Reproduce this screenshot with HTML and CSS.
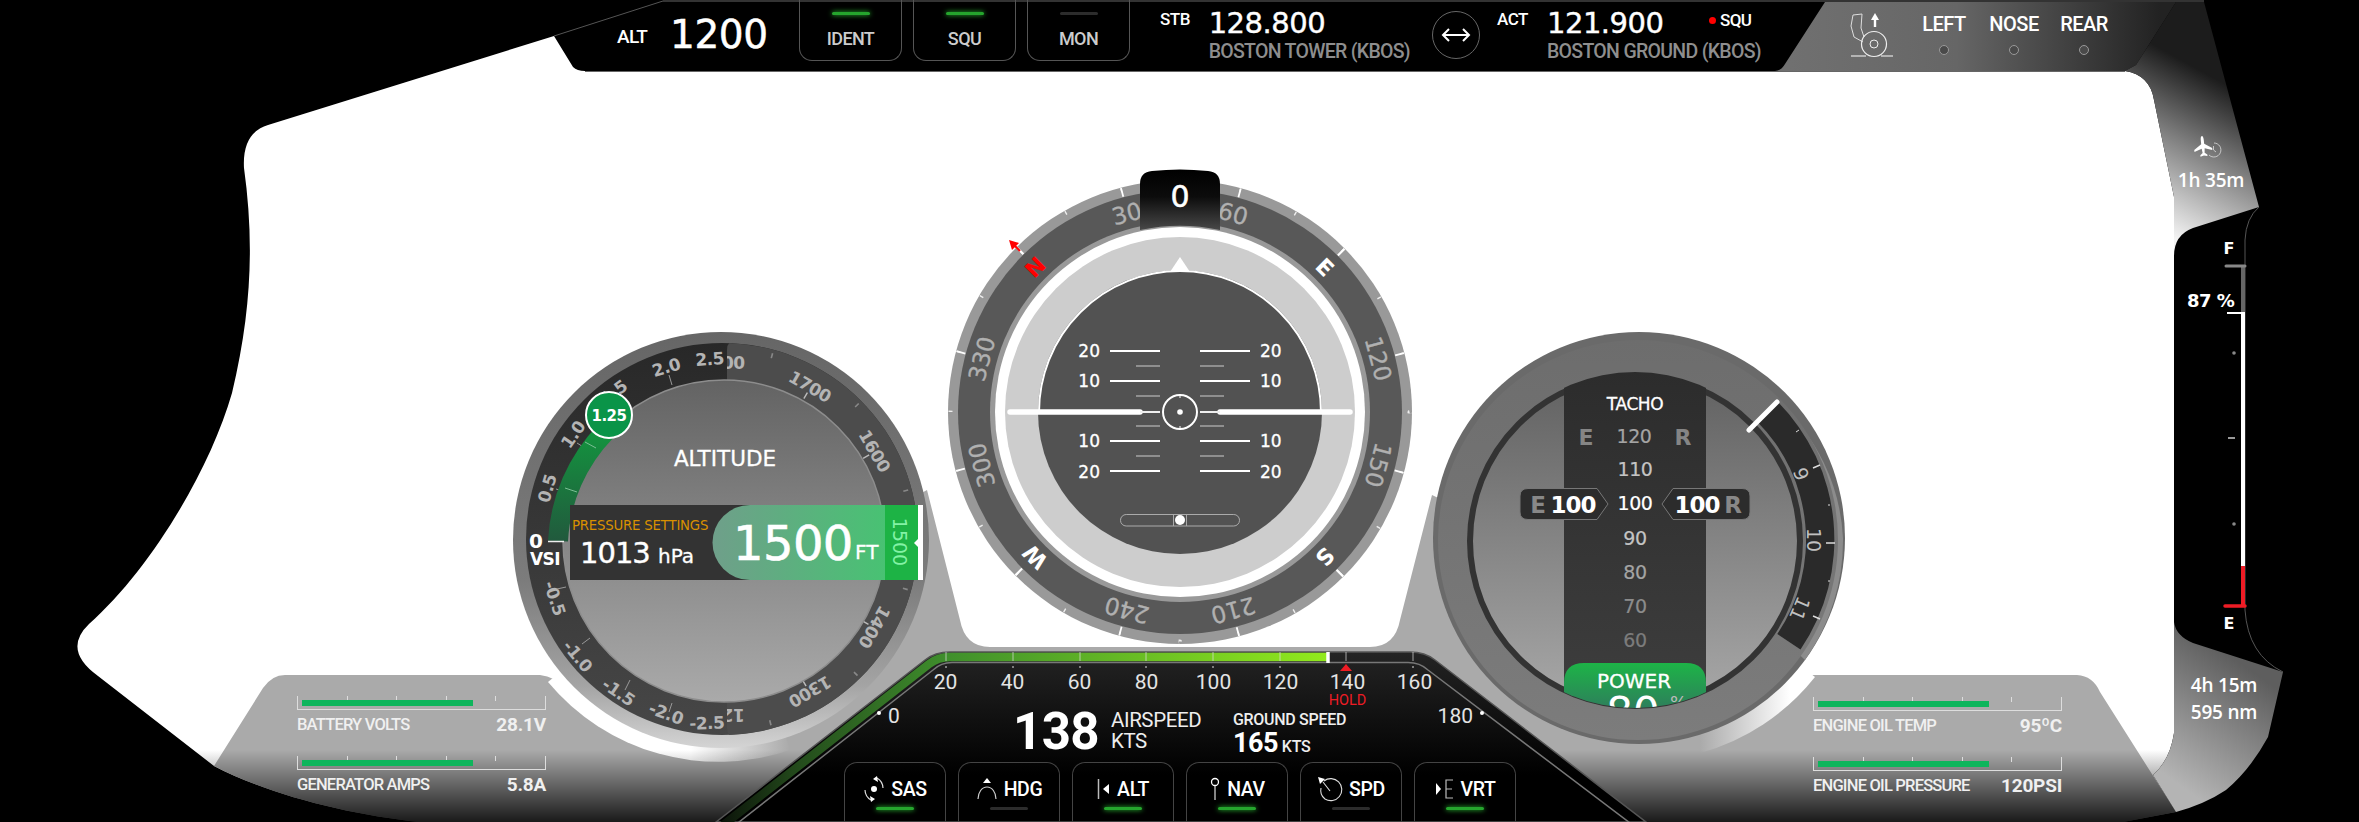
FILE: index.html
```html
<!DOCTYPE html>
<html lang="en">
<head>
    <meta charset="UTF-8">
    <title>Flight display</title>
    <link rel="stylesheet" href="styles.css">
</head>
<body>
<div class="cluster">

    <!-- body of the display: white glass, side strips, lower panels -->
    <svg class="layer shell" viewBox="0 0 2359 822">
        <defs>
            <linearGradient id="gearGrad" gradientUnits="userSpaceOnUse" x1="1790" y1="0" x2="2160" y2="0">
                <stop offset="0" stop-color="#707070"/>
                <stop offset=".45" stop-color="#666"/>
                <stop offset="1" stop-color="#222"/>
            </linearGradient>
            <linearGradient id="stripTop" gradientUnits="userSpaceOnUse" x1="2168" y1="235" x2="2245" y2="95">
                <stop offset="0" stop-color="#f4f4f4"/>
                <stop offset=".55" stop-color="#808080"/>
                <stop offset="1" stop-color="#1c1c1c"/>
            </linearGradient>
            <linearGradient id="stripBottom" gradientUnits="userSpaceOnUse" x1="2172" y1="780" x2="2250" y2="670">
                <stop offset="0" stop-color="#b4b4b4"/>
                <stop offset="1" stop-color="#5e5e5e"/>
            </linearGradient>
            <linearGradient id="fadeOut" x1="0" y1="0" x2="0" y2="1">
                <stop offset="0" stop-color="#000" stop-opacity="0"/>
                <stop offset="1" stop-color="#000" stop-opacity=".85"/>
            </linearGradient>
            <linearGradient id="crescentL" gradientUnits="userSpaceOnUse" x1="690" y1="0" x2="790" y2="0">
                <stop offset="0" stop-color="#fff"/>
                <stop offset="1" stop-color="#aaa"/>
            </linearGradient>
            <linearGradient id="crescentR" gradientUnits="userSpaceOnUse" x1="1790" y1="0" x2="1700" y2="0">
                <stop offset="0" stop-color="#fff"/>
                <stop offset="1" stop-color="#aaa"/>
            </linearGradient>
        </defs>
        <path fill="#fff" d="M554 36 L573 67 Q577 71 585 71 L2125 71 Q2150 75 2154 100 L2174 197 L2174 733 Q2170 760 2153 775 L2176 812 L2123 822 L420 822 C350 815 270 795 214 766 L98 676 Q62 650 89 624 C150 570 210 470 232 393 C252 310 254 240 244 168 Q242 133 268 125 Z"/>
        <path fill="#aaa" d="M214 766 L263 688 Q272 675 285 675 L540 675 Q555 677 566 688 L927 490 L960 620 Q965 647 990 647 L1370 647 Q1395 647 1400 620 L1432 495 L1810 675 L2077 675 Q2093 676 2100 692 L2176 812 L2123 822 L420 822 C350 815 270 795 214 766 Z"/>
        <path fill="url(#crescentL)" d="M548 682 A222 222 0 0 0 790 750 L722 539 Z"/>
        <path fill="url(#crescentR)" d="M1815 677 A222 222 0 0 1 1700 753 L1638 540 Z"/>
        <rect x="0" y="750" width="2359" height="72" fill="url(#fadeOut)"/>
        <path fill="url(#gearGrad)" d="M1825 2 L1785 64 Q1781 71 1775 71 L2125 71 L2136 65 L2176 2 Z"/>
        <path fill="url(#stripTop)" d="M2176 2 L2204 2 L2259 207 L2193 228 Q2174 235 2174 256 L2174 197 L2154 100 Q2150 75 2125 71 L2136 65 Z"/>
        <path fill="url(#stripBottom)" d="M2174 622 Q2176 636 2193 643 L2283 672 L2268 737 Q2250 770 2226 790 Q2205 804 2176 812 L2153 775 Q2170 760 2174 733 Z"/>
        <path fill="none" stroke="#555" d="M554 36 L663 1 M2259 207 Q2246 218 2245 240 L2245 610 Q2248 655 2283 672"/>
        <path fill="none" stroke="#666" d="M585 71.5 L2125 71.5"/>
        <rect x="663" y="0" width="1541" height="2" fill="#333"/>
    </svg>

    <!-- altitude dial -->
    <svg class="layer dial-alt" viewBox="510 328 425 430">
        <defs>
            <linearGradient id="altRim" x1="0" y1="0" x2="0" y2="1">
                <stop offset="0" stop-color="#666"/>
                <stop offset=".6" stop-color="#7c7c7c"/>
                <stop offset=".85" stop-color="#a4a4a4"/>
                <stop offset="1" stop-color="#d4d4d4"/>
            </linearGradient>
            <linearGradient id="altBand" x1="0" y1="0" x2="0" y2="1">
                <stop offset="0" stop-color="#282828"/>
                <stop offset="1" stop-color="#474747"/>
            </linearGradient>
            <linearGradient id="altFace" x1="0" y1="0" x2="0" y2="1">
                <stop offset="0" stop-color="#636363"/>
                <stop offset="1" stop-color="#aaa"/>
            </linearGradient>
            <linearGradient id="vsiArc" gradientUnits="userSpaceOnUse" x1="0" y1="540" x2="0" y2="420">
                <stop offset="0" stop-color="#215a3d"/>
                <stop offset="1" stop-color="#129a3f"/>
            </linearGradient>
            <linearGradient id="altPill" gradientUnits="userSpaceOnUse" x1="713" y1="0" x2="885" y2="0">
                <stop offset="0" stop-color="#6f9f8a"/>
                <stop offset="1" stop-color="#48c273"/>
            </linearGradient>
            <clipPath id="rightHalf"><path d="M737 340 Q727 340 727 350 L727 728 Q727 738 737 738 L930 738 L930 340 Z"/></clipPath>
        </defs>
        <circle cx="721" cy="540" r="208" fill="url(#altRim)"/>
        <circle cx="722" cy="539" r="196" fill="url(#altBand)"/>
        <g clip-path="url(#rightHalf)">
            <circle cx="722" cy="539" r="196" fill="#4c4c4c"/>
            <circle cx="722" cy="539" r="190" fill="none" stroke="#888" stroke-width="5" pathLength="360" stroke-dasharray=".5 29.5" stroke-dashoffset="-15"/>
            <circle cx="722" cy="539" r="166" fill="none" stroke="#bbb" stroke-width="7" pathLength="360" stroke-dasharray=".5 29.5"/>
            <g class="alt-num">
                <text x="722" y="369" transform="rotate(0 722 539)">1800</text>
                <text x="722" y="369" transform="rotate(30 722 539)">1700</text>
                <text x="722" y="369" transform="rotate(60 722 539)">1600</text>
                <text x="722" y="369" transform="rotate(120 722 539)">1400</text>
                <text x="722" y="369" transform="rotate(150 722 539)">1300</text>
                <text x="722" y="369" transform="rotate(180 722 539)">1200</text>
            </g>
        </g>
        <g class="alt-num">
            <text transform="translate(710 365) rotate(-4)">2.5</text>
            <text transform="translate(668 373) rotate(-17)">2.0</text>
            <text transform="translate(617 397) rotate(-36)">1.5</text>
            <text transform="translate(578 438) rotate(-55)">1.0</text>
            <text transform="translate(553 490) rotate(-74)">0.5</text>
            <text transform="translate(549 600) rotate(72)">-0.5</text>
            <text transform="translate(573 660) rotate(50)">-1.0</text>
            <text transform="translate(615 697) rotate(35)">-1.5</text>
            <text transform="translate(664 719) rotate(20)">-2.0</text>
            <text transform="translate(707 729) rotate(-2)">-2.5</text>
        </g>
        <g stroke="#999" fill="none">
            <path d="M672 385 L669 375 M585 448 L577 443 M566 492 L556 489 M566 587 L557 589 M590 638 L582 644 M630 680 L625 690 M672 703 L669 712"/>
        </g>
        <circle cx="724" cy="541" r="161" fill="url(#altFace)" stroke="#8d8d8d" stroke-width="1.5"/>
        <path d="M558 541 A170 170 0 0 1 606 431" fill="none" stroke="url(#vsiArc)" stroke-width="20"/>
        <path d="M548 541.5 L564 541.5" stroke="#eee" stroke-width="1.5"/>
        <path d="M565 488 L577 492 M585 442 L596 448" stroke="#7cbf95"/>
        <text class="vsi-zero" x="536" y="548">0</text>
        <text class="vsi-label" x="545" y="565">VSI</text>

        <text class="alt-title" x="725" y="466">ALTITUDE</text>

        <rect x="570" y="505" width="200" height="75" fill="#333"/>
        <path d="M923 505 L750 505 A37.5 37.5 0 0 0 750 580 L923 580 Z" fill="url(#altPill)"/>
        <rect x="885" y="505" width="35" height="75" fill="#1db345"/>
        <rect x="918" y="505" width="5" height="75" fill="#fff"/>
        <path d="M914 543 L921 536 L921 550 Z" fill="#fff"/>
        <text class="press-label" x="572" y="530">PRESSURE SETTINGS</text>
        <text class="press-value" x="580" y="563">1013</text>
        <text class="press-unit" x="658" y="563">hPa</text>
        <text class="alt-value" x="733" y="560">1500</text>
        <text class="alt-unit" x="855" y="559">FT</text>
        <text class="alt-mark" transform="translate(899 542) rotate(90)" y="6">1500</text>

        <circle cx="609" cy="415" r="23" fill="#0a9448" stroke="#fff" stroke-width="2"/>
        <text class="vsi-marker" x="609" y="421">1.25</text>
    </svg>

    <!-- compass and attitude -->
    <svg class="layer dial-compass" viewBox="940 165 480 482">
        <defs>
            <linearGradient id="hdgTab" x1="0" y1="0" x2="0" y2="1">
                <stop offset="0" stop-color="#000"/>
                <stop offset=".45" stop-color="#0c0c0c"/>
                <stop offset="1" stop-color="#484848"/>
            </linearGradient>
        </defs>
        <circle cx="1180" cy="412" r="232" fill="#999"/>
        <circle cx="1180" cy="412" r="222" fill="#585858"/>
        <circle cx="1180" cy="412" r="190" fill="#999"/>
        <circle cx="1180" cy="412" r="185" fill="#fff"/>
        <circle cx="1180" cy="412" r="175" fill="#cdcdcd"/>
        <circle cx="1180" cy="412" r="142" fill="#525252"/>
        <circle cx="1180" cy="412" r="229.500" fill="none" stroke="#eee" stroke-width="4" pathLength="360" stroke-dasharray=".35 14.65"/>
        <circle cx="1180" cy="412" r="227" fill="none" stroke="#fff" stroke-width="9" pathLength="360" stroke-dasharray=".5 89.5" stroke-dashoffset="-45"/>
        <circle cx="1180" cy="412" r="227" fill="none" stroke="#fff" stroke-width="9" pathLength="360" stroke-dasharray=".45 29.55" stroke-dashoffset="-15"/>

        <g class="hdg-num">
            <text x="1180" y="215" transform="rotate(-15 1180 412)">30</text>
            <text x="1180" y="215" transform="rotate(15 1180 412)">60</text>
            <text x="1180" y="215" transform="rotate(75 1180 412)">120</text>
            <text x="1180" y="215" transform="rotate(105 1180 412)">150</text>
            <text x="1180" y="215" transform="rotate(165 1180 412)">210</text>
            <text x="1180" y="215" transform="rotate(195 1180 412)">240</text>
            <text x="1180" y="215" transform="rotate(255 1180 412)">300</text>
            <text x="1180" y="215" transform="rotate(285 1180 412)">330</text>
        </g>
        <g class="hdg-point">
            <text x="1180" y="215" transform="rotate(45 1180 412)">E</text>
            <text x="1180" y="215" transform="rotate(135 1180 412)">S</text>
            <text x="1180" y="215" transform="rotate(225 1180 412)">W</text>
            <text class="hdg-north" x="1180" y="215" transform="rotate(315 1180 412)">N</text>
        </g>
        <path d="M1020 251 L1012 243" stroke="#f00" stroke-width="2"/>
        <path d="M1009 240 L1019 243 L1012 250 Z" fill="#f00"/>

        <path d="M1140 230 L1140 184 Q1140 172 1152 171 Q1180 168 1208 171 Q1220 172 1220 184 L1220 230 A190 190 0 0 0 1140 230 Z" fill="url(#hdgTab)"/>
        <text class="hdg-value" x="1180" y="207">0</text>

        <path d="M1039 412 A141 141 0 0 1 1321 412" fill="none" stroke="#fff" stroke-width="2"/>
        <path d="M1180 257 L1190 272 L1170 272 Z" fill="#fff"/>

        <path d="M1010 412 L1140 412 M1220 412 L1350 412" stroke="#fff" stroke-width="5.5" stroke-linecap="round"/>
        <path d="M1140 412 L1160 412 M1200 412 L1220 412" stroke="#eee" stroke-width="2"/>
        <path d="M1110 351 H1160 M1110 381 H1160 M1110 441 H1160 M1110 471 H1160 M1200 351 H1250 M1200 381 H1250 M1200 441 H1250 M1200 471 H1250" stroke="#fff" stroke-width="2.2"/>
        <path d="M1136 366 H1160 M1136 396 H1160 M1136 426 H1160 M1136 456 H1160 M1200 366 H1224 M1200 396 H1224 M1200 426 H1224 M1200 456 H1224" stroke="#ccc"/>
        <g class="pitch-l">
            <text x="1100" y="357">20</text>
            <text x="1100" y="387">10</text>
            <text x="1100" y="447">10</text>
            <text x="1100" y="478">20</text>
        </g>
        <g class="pitch-r">
            <text x="1260" y="357">20</text>
            <text x="1260" y="387">10</text>
            <text x="1260" y="447">10</text>
            <text x="1260" y="478">20</text>
        </g>
        <circle cx="1180" cy="412" r="17" fill="none" stroke="#fff" stroke-width="2"/>
        <path d="M1180 394 V398 M1180 426 V430" stroke="#fff"/>
        <circle cx="1180" cy="412" r="2.8" fill="#fff"/>
        <rect x="1120.5" y="514.5" width="119" height="11.5" rx="5.7" fill="none" stroke="#aaa"/>
        <path d="M1173.5 514 V526 M1186.5 514 V526" stroke="#aaa"/>
        <circle cx="1180" cy="520" r="5" fill="#fff"/>
    </svg>

    <!-- tacho dial -->
    <svg class="layer dial-tacho" viewBox="1428 328 422 420">
        <defs>
            <linearGradient id="tachoRim" x1="0" y1="0" x2="0" y2="1">
                <stop offset="0" stop-color="#6d6d6d"/>
                <stop offset="1" stop-color="#7c7c7c"/>
            </linearGradient>
            <linearGradient id="tachoFace" x1="0" y1="0" x2="0" y2="1">
                <stop offset="0" stop-color="#616161"/>
                <stop offset="1" stop-color="#a8a8a8"/>
            </linearGradient>
            <linearGradient id="tachoStrip" x1="0" y1="0" x2="0" y2="1">
                <stop offset="0" stop-color="#2c2c2c"/>
                <stop offset="1" stop-color="#3e3e3e"/>
            </linearGradient>
            <linearGradient id="powerPill" x1="0" y1="0" x2="0" y2="1">
                <stop offset="0" stop-color="#1db447"/>
                <stop offset="1" stop-color="#2e7d5c"/>
            </linearGradient>
            <clipPath id="tachoClip"><circle cx="1635" cy="540" r="168"/></clipPath>
        </defs>
        <circle cx="1639" cy="538" r="206" fill="#6a6a6a"/>
        <path d="M1777 401 A196 196 0 0 1 1843 538 A206 206 0 0 1 1805 660 L1777.3 634 Z" fill="#8c8c8c"/>
        <circle cx="1638" cy="540" r="200" fill="url(#tachoRim)"/>
        <path d="M1777 401 A196 196 0 0 1 1800.5 649.6 L1777.3 634 A168 168 0 0 0 1756.8 421.2 Z" fill="#2a2a2a"/>
        <circle cx="1635" cy="541" r="165" fill="url(#tachoFace)" stroke="#333" stroke-width="6"/>
        <path d="M1749 430 L1777 402" stroke="#fff" stroke-width="5" stroke-linecap="round"/>
        <g stroke="#ddd" fill="none">
            <path d="M1813 468 L1820 465 M1826 543 L1835 543 M1813 616 L1820 619" stroke-width="1.5"/>
            <path d="M1796 432 L1799 430 M1828 505 L1830 505 M1828 581 L1830 581"/>
        </g>
        <g class="tacho-scale">
            <text x="1638" y="371" transform="rotate(68 1638 540)">9</text>
            <text x="1638" y="371" transform="rotate(90 1638 540)">10</text>
            <text x="1638" y="371" transform="rotate(113 1638 540)">11</text>
        </g>

        <g clip-path="url(#tachoClip)">
            <rect x="1564" y="370" width="142" height="340" fill="url(#tachoStrip)"/>
            <path d="M1564 710 L1564 683 Q1564 663 1584 663 L1686 663 Q1706 663 1706 683 L1706 710 Z" fill="url(#powerPill)"/>
            <text class="power-label" x="1634" y="688">POWER</text>
            <text class="power-value" x="1633" y="727">80</text>
            <text class="power-unit" x="1670" y="709">%</text>
        </g>

        <text class="tacho-title" x="1635" y="410">TACHO</text>
        <text class="tacho-side" x="1586" y="445">E</text>
        <text class="tacho-side" x="1683" y="445">R</text>
        <g class="tacho-num">
            <text class="fade-3" x="1634" y="443">120</text>
            <text class="fade-2" x="1635" y="476">110</text>
            <text class="fade-0" x="1635" y="510">100</text>
            <text class="fade-2" x="1635" y="545">90</text>
            <text class="fade-3" x="1635" y="579">80</text>
            <text class="fade-4" x="1635" y="613">70</text>
            <text class="fade-5" x="1635" y="647">60</text>
        </g>
        <path d="M1528 488.5 L1597 488.5 L1608 504 L1597 519.5 L1528 519.5 Q1520 519.5 1520 512 L1520 496 Q1520 488.5 1528 488.5 Z" fill="#2c2c2c" stroke="#777"/>
        <path d="M1742 488.5 L1673 488.5 L1662 504 L1673 519.5 L1742 519.5 Q1750 519.5 1750 512 L1750 496 Q1750 488.5 1742 488.5 Z" fill="#2c2c2c" stroke="#777"/>
        <text class="tag-letter" x="1538" y="513">E</text>
        <text class="tag-value" x="1573" y="513">100</text>
        <text class="tag-value" x="1697" y="513">100</text>
        <text class="tag-letter" x="1733" y="513">R</text>
    </svg>

    <!-- fuel scale -->
    <svg class="layer dial-fuel" viewBox="2180 235 70 400">
        <path d="M2243 266 V312" stroke="#666" stroke-width="4"/>
        <path d="M2243 312 V566" stroke="#fff" stroke-width="4"/>
        <path d="M2243 566 V607" stroke="#ee1c25" stroke-width="4"/>
        <path d="M2226 266 H2245" stroke="#888" stroke-width="3" stroke-linecap="round"/>
        <path d="M2227 313 H2245" stroke="#fff" stroke-width="2"/>
        <path d="M2225 606 H2245" stroke="#ee1c25" stroke-width="3.5" stroke-linecap="round"/>
        <path d="M2228 438 H2235" stroke="#ccc" stroke-width="1.5"/>
        <circle cx="2234" cy="353" r="1.8" fill="#888"/>
        <circle cx="2234" cy="524" r="1.8" fill="#888"/>
        <text class="fuel-mark" x="2229" y="254">F</text>
        <text class="fuel-value" x="2187" y="307">87 %</text>
        <text class="fuel-mark" x="2229" y="629">E</text>
    </svg>

    <!-- top bar -->
    <header class="topbar">
        <div class="alt-block">
            <span class="alt-tag">ALT</span>
            <span class="alt-read">1200</span>
        </div>
        <div class="top-buttons">
            <div class="top-btn"><i class="led on"></i><span>IDENT</span></div>
            <div class="top-btn"><i class="led on"></i><span>SQU</span></div>
            <div class="top-btn"><i class="led"></i><span>MON</span></div>
        </div>
        <div class="radio radio-stb">
            <span class="radio-tag">STB</span>
            <div>
                <div class="radio-freq">128.800</div>
                <div class="radio-name">BOSTON TOWER (KBOS)</div>
            </div>
        </div>
        <div class="swap">
            <svg width="30" height="16" viewBox="0 0 30 16"><path d="M2 8 H28 M8 2 L2 8 L8 14 M22 2 L28 8 L22 14" fill="none" stroke="#fff" stroke-width="2"/></svg>
        </div>
        <div class="radio radio-act">
            <span class="radio-tag">ACT</span>
            <div>
                <div class="radio-freq">121.900</div>
                <div class="radio-name">BOSTON GROUND (KBOS)</div>
            </div>
            <span class="radio-squ"><i></i>SQU</span>
        </div>
    </header>

    <div class="gearbar">
        <svg class="gear-icon" width="62" height="46" viewBox="1847 12 62 46">
            <path d="M1851 26 L1853 15 L1862 14 L1861 28 L1864 37 M1851 26 L1854 37 L1863 42" fill="none" stroke="#ddd"/>
            <circle cx="1874" cy="44" r="12.5" fill="none" stroke="#eee" stroke-width="1.2"/>
            <circle cx="1874" cy="44" r="4" fill="none" stroke="#eee"/>
            <path d="M1875 27 V18" stroke="#fff" stroke-width="2.4"/>
            <path d="M1875 13 L1879 20 L1871 20 Z" fill="#fff"/>
            <path d="M1851 56 H1866 M1881 56 H1893" stroke="#ccc" stroke-width="1.6"/>
        </svg>
        <div class="gear-col"><span>LEFT</span><i></i></div>
        <div class="gear-col"><span>NOSE</span><i></i></div>
        <div class="gear-col"><span>REAR</span><i></i></div>
    </div>

    <div class="trip trip-top">
        <svg width="36" height="26" viewBox="0 0 36 26">
            <g transform="translate(15 12) rotate(-6)">
                <path d="M0 -11 C1 -11 1.5 -9 1.5 -7 L1.5 -3 L9 2 L9 4 L1.5 1.5 L1 6 L3.5 8 L3.5 9.5 L0 8.5 L-3.5 9.5 L-3.5 8 L-1 6 L-1.5 1.5 L-9 4 L-9 2 L-1.5 -3 L-1.5 -7 C-1.5 -9 -1 -11 0 -11 Z" fill="#fff"/>
            </g>
            <path d="M26 8 A7 7 0 1 1 21 20 M25.500 11 V15 L28 17" fill="none" stroke="#ddd" stroke-width=".8"/>
        </svg>
        <span>1h 35m</span>
    </div>
    <div class="trip trip-bottom">
        <span>4h 15m</span>
        <span>595 nm</span>
    </div>

    <!-- lower meters -->
    <section class="meters meters-left">
        <div class="meter">
            <div class="track"><div class="ticks"><i></i><i></i><i></i><i></i><i></i></div><div class="fill" style="width: 171px"></div></div>
            <div class="meter-row"><span>BATTERY VOLTS</span><b>28.1V</b></div>
        </div>
        <div class="meter">
            <div class="track"><div class="ticks"><i></i><i></i><i></i><i></i><i></i></div><div class="fill" style="width: 171px"></div></div>
            <div class="meter-row"><span>GENERATOR AMPS</span><b>5.8A</b></div>
        </div>
    </section>
    <section class="meters meters-right">
        <div class="meter">
            <div class="track"><div class="ticks"><i></i><i></i><i></i><i></i><i></i></div><div class="fill" style="width: 171px"></div></div>
            <div class="meter-row"><span>ENGINE OIL TEMP</span><b>95ºC</b></div>
        </div>
        <div class="meter">
            <div class="track"><div class="ticks"><i></i><i></i><i></i><i></i><i></i></div><div class="fill" style="width: 171px"></div></div>
            <div class="meter-row"><span>ENGINE OIL PRESSURE</span><b>120PSI</b></div>
        </div>
    </section>

    <!-- airspeed panel -->
    <svg class="layer speed-back" viewBox="0 0 2359 822">
        <defs>
            <linearGradient id="speedFill" gradientUnits="userSpaceOnUse" x1="0" y1="652" x2="0" y2="775">
                <stop offset="0" stop-color="#242424"/>
                <stop offset="1" stop-color="#000"/>
            </linearGradient>
            <linearGradient id="speedBar" gradientUnits="userSpaceOnUse" x1="722" y1="0" x2="1328" y2="0">
                <stop offset="0" stop-color="#0c140a"/>
                <stop offset=".13" stop-color="#244d1c"/>
                <stop offset=".37" stop-color="#3f8f2c"/>
                <stop offset="1" stop-color="#92ea1c"/>
            </linearGradient>
        </defs>
        <path d="M716 822 L925 660 Q935 652 950 652 L1410 652 Q1425 652 1435 660 L1646 822 Z" fill="url(#speedFill)" stroke="#555" stroke-width="1.5"/>
        <path d="M722 826 L929 664 Q938 657 950 657 L1328 657" fill="none" stroke="url(#speedBar)" stroke-width="8.500"/>
        <path d="M734 826 L933 670 Q941 662.500 952 662.500 L1408 662.500 Q1420 662.500 1428 670 L1634 826" fill="none" stroke="#777" stroke-width="1.5"/>
        <path d="M946 652 V661 M1013 652 V661 M1080 652 V661 M1146 652 V661 M1213 652 V661 M1280 652 V661 M1346 652 V661 M1413 652 V661" stroke="#ddd" stroke-opacity=".7"/>
        <path d="M1328 652 V663" stroke="#fff" stroke-width="3.500"/>
        <path d="M946 666 V668 M1013 666 V668 M1080 666 V668 M1146 666 V668 M1213 666 V668 M1280 666 V668 M1413 666 V668" stroke="#ddd"/>
        <path d="M1346 664 L1352 671 L1340 671 Z" fill="#ee1c25"/>
    </svg>

    <section class="speed">
        <div class="speed-scale">
            <span>20</span><span>40</span><span>60</span><span>80</span><span>100</span><span>120</span>
            <span class="hold-mark">140<em>HOLD</em></span><span>160</span>
        </div>
        <div class="speed-read">
            <span class="limit limit-low"><i></i>0</span>
            <strong class="air-value">138</strong>
            <span class="air-label">AIRSPEED<br>KTS</span>
            <div class="ground">
                <span>GROUND SPEED</span>
                <div><b>165</b> KTS</div>
            </div>
            <span class="limit limit-high">180<i></i></span>
        </div>
        <div class="modes">
            <div class="mode">
                <div class="mode-top">
                    <svg width="22" height="26" viewBox="0 0 22 26">
                        <circle cx="11" cy="13" r="3" fill="#fff"/>
                        <path d="M14 2 A12 12 0 0 1 20 12 M8 24 A12 12 0 0 1 2 14" fill="none" stroke="#ddd" stroke-width="1.2"/>
                        <path d="M14 0 L10 3 L15 6 Z M8 26 L12 23 L7 20 Z" fill="#fff"/>
                    </svg>
                    <span>SAS</span>
                </div>
                <i class="led on"></i>
            </div>
            <div class="mode">
                <div class="mode-top">
                    <svg width="22" height="24" viewBox="0 0 22 24">
                        <path d="M11 1 L15 6 L7 6 Z" fill="#fff"/>
                        <path d="M2 22 A9 12 0 0 1 20 22" fill="none" stroke="#ccc" stroke-width="1.2"/>
                    </svg>
                    <span>HDG</span>
                </div>
                <i class="led"></i>
            </div>
            <div class="mode">
                <div class="mode-top">
                    <svg width="14" height="24" viewBox="0 0 14 24">
                        <path d="M1.500 2 V22" stroke="#bbb" stroke-width="1.5"/>
                        <path d="M6 12 L12 7 L12 17 Z" fill="#fff"/>
                    </svg>
                    <span>ALT</span>
                </div>
                <i class="led on"></i>
            </div>
            <div class="mode">
                <div class="mode-top">
                    <svg width="12" height="26" viewBox="0 0 12 26">
                        <circle cx="6" cy="6" r="3.500" fill="none" stroke="#fff" stroke-width="1.3"/>
                        <path d="M6 10 V24" stroke="#ddd" stroke-width="1.2"/>
                    </svg>
                    <span>NAV</span>
                </div>
                <i class="led on"></i>
            </div>
            <div class="mode">
                <div class="mode-top">
                    <svg width="26" height="26" viewBox="0 0 26 26">
                        <path d="M1 1 L8 3 L3 8 Z" fill="#fff"/>
                        <path d="M6 6 L13 15 M7 5 A11 11 0 1 1 8 23 M4 12 A11 11 0 0 0 8 23" fill="none" stroke="#ddd" stroke-width="1.1"/>
                    </svg>
                    <span>SPD</span>
                </div>
                <i class="led"></i>
            </div>
            <div class="mode">
                <div class="mode-top">
                    <svg width="20" height="24" viewBox="0 0 20 24">
                        <path d="M1 6 L6 12 L1 18 Z" fill="#fff"/>
                        <path d="M18 3 H11 V21 H18 M11 12 H17" fill="none" stroke="#bbb" stroke-width="1.2"/>
                    </svg>
                    <span>VRT</span>
                </div>
                <i class="led on"></i>
            </div>
        </div>
    </section>
</div>
</body>
</html>
```

FILE: styles.css
```css
* {
    box-sizing: border-box;
}

body {
    margin: 0;
    background: #000;
    font-family: Roboto, "Liberation Sans", sans-serif;
    color: #fff;
    overflow: hidden;
}

.cluster {
    position: relative;
    width: 2359px;
    height: 822px;
    overflow: hidden;
    background: #000;
}

.layer {
    position: absolute;
    display: block;
}

.shell,
.speed-back {
    left: 0;
    top: 0;
    width: 2359px;
    height: 822px;
}

.dial-alt {
    left: 510px;
    top: 328px;
    width: 425px;
    height: 430px;
}

.dial-compass {
    left: 940px;
    top: 165px;
    width: 480px;
    height: 482px;
}

.dial-tacho {
    left: 1428px;
    top: 328px;
    width: 422px;
    height: 420px;
}

.dial-fuel {
    left: 2180px;
    top: 235px;
    width: 70px;
    height: 400px;
}

/* svg text */
svg text {
    font-family: "DejaVu Sans", sans-serif;
    fill: #fff;
}

.alt-num text {
    font-size: 17px;
    fill: #b4b4b4;
    text-anchor: middle;
    font-weight: 700;
    letter-spacing: -0.5px;
}

.vsi-zero {
    font-size: 20px;
    font-weight: 700;
    text-anchor: middle;
}

.vsi-label {
    font-size: 17px;
    font-weight: 700;
    text-anchor: middle;
    letter-spacing: -0.5px;
}

.alt-title {
    font-size: 21.5px;
    text-anchor: middle;
    stroke: #fff;
    stroke-width: 0.3px;
}

.press-label {
    font-size: 13.3px;
    fill: #d99000;
    letter-spacing: -0.2px;
}

.press-value {
    font-size: 29px;
    letter-spacing: -1px;
    stroke: #fff;
    stroke-width: 0.4px;
}

.press-unit {
    font-size: 20px;
    stroke: #fff;
    stroke-width: 0.3px;
}

.alt-value {
    font-size: 48px;
    letter-spacing: -0.6px;
    stroke: #fff;
    stroke-width: 0.6px;
}

.alt-unit {
    font-size: 20px;
    stroke: #fff;
    stroke-width: 0.3px;
}

.alt-mark {
    font-size: 19px;
    fill: #83f2a5;
    text-anchor: middle;
}

.vsi-marker {
    font-size: 15px;
    font-weight: 700;
    text-anchor: middle;
    letter-spacing: -0.5px;
}

.hdg-num text {
    font-size: 23.5px;
    fill: #b0b0b0;
    text-anchor: middle;
    stroke: #b0b0b0;
    stroke-width: 0.3px;
}

.hdg-point text {
    font-size: 22px;
    font-weight: 700;
    text-anchor: middle;
}

.hdg-point .hdg-north {
    fill: #f00;
}

.hdg-value {
    font-size: 30px;
    text-anchor: middle;
    stroke: #fff;
    stroke-width: 0.5px;
}

.pitch-l text {
    font-size: 17px;
    text-anchor: end;
    stroke: #fff;
    stroke-width: 0.3px;
}

.pitch-r text {
    font-size: 17px;
    stroke: #fff;
    stroke-width: 0.3px;
}

.tacho-scale text {
    font-size: 19px;
    fill: #c0c0c0;
    text-anchor: middle;
}

.tacho-title {
    font-size: 17px;
    text-anchor: middle;
    letter-spacing: -0.4px;
    stroke: #fff;
    stroke-width: 0.3px;
}

.tacho-side {
    font-size: 22px;
    font-weight: 700;
    fill: #858585;
    text-anchor: middle;
}

.tacho-num text {
    font-size: 19px;
    text-anchor: middle;
    letter-spacing: -0.4px;
    stroke: currentColor;
    stroke-width: 0.2px;
}

.tacho-num .fade-0 { fill: #fff; color: #fff; }
.tacho-num .fade-2 { fill: #c4c4c4; color: #c4c4c4; }
.tacho-num .fade-3 { fill: #a4a4a4; color: #a4a4a4; }
.tacho-num .fade-4 { fill: #8c8c8c; color: #8c8c8c; }
.tacho-num .fade-5 { fill: #7c7c7c; color: #7c7c7c; }

.tag-letter {
    font-size: 23px;
    font-weight: 700;
    fill: #888;
    text-anchor: middle;
}

.tag-value {
    font-size: 23px;
    font-weight: 700;
    text-anchor: middle;
    letter-spacing: -1px;
}

.power-label {
    font-size: 20px;
    text-anchor: middle;
    stroke: #fff;
    stroke-width: 0.3px;
}

.power-value {
    font-size: 42px;
    text-anchor: middle;
}

.power-unit {
    font-size: 18px;
    fill: #bbb;
}

.fuel-mark {
    font-size: 16px;
    font-weight: 700;
    text-anchor: middle;
}

.fuel-value {
    font-size: 18px;
    font-weight: 700;
    letter-spacing: -0.5px;
}

/* leds */
.led {
    display: block;
    width: 38px;
    height: 3px;
    border-radius: 2px;
    background: #2c2c2c;
}

.led.on {
    background: #25a52d;
    box-shadow: 0 0 5px #2ed137;
}

/* top bar */
.topbar {
    position: absolute;
    left: 617px;
    top: 0;
    height: 71px;
    display: flex;
    align-items: flex-start;
}

.alt-block {
    width: 182px;
    display: flex;
    align-items: center;
    gap: 22px;
    height: 68px;
}

.alt-tag {
    font-size: 19px;
    font-weight: 500;
    width: 31px;
    letter-spacing: -0.6px;
    padding-top: 5px;
}

.alt-read {
    font-family: "DejaVu Sans", sans-serif;
    font-size: 39px;
    line-height: 41px;
    letter-spacing: -0.4px;
    -webkit-text-stroke: 0.5px #fff;
}

.top-buttons {
    display: flex;
    gap: 11px;
}

.top-btn {
    width: 103px;
    height: 61px;
    border: 1px solid #555;
    border-top: 0;
    border-radius: 0 0 13px 13px;
    display: flex;
    flex-direction: column;
    align-items: center;
    padding-top: 12px;
    font-size: 18px;
    font-weight: 500;
    letter-spacing: -0.6px;
    color: #ccc;
}

.top-btn span {
    margin-top: 13px;
}

.radio {
    display: flex;
    align-items: flex-start;
    padding-top: 6px;
}

.radio-stb {
    margin-left: 30px;
    width: 250px;
    gap: 16px;
}

.radio-act {
    width: 264px;
    gap: 17px;
    position: relative;
}

.radio-tag {
    width: 33px;
    font-size: 17px;
    font-weight: 500;
    line-height: 26px;
    letter-spacing: -0.5px;
}

.radio-freq {
    font-family: "DejaVu Sans", sans-serif;
    font-size: 29px;
    line-height: 34px;
    letter-spacing: -0.5px;
    -webkit-text-stroke: 0.4px #fff;
}

.radio-name {
    font-size: 19.5px;
    font-weight: 500;
    line-height: 22px;
    margin-top: 1px;
    letter-spacing: -0.7px;
    color: #8e8e8e;
    white-space: nowrap;
}

.radio-squ {
    position: absolute;
    left: 212px;
    top: 9px;
    font-size: 17px;
    font-weight: 500;
    line-height: 22px;
    letter-spacing: -0.6px;
    display: flex;
    align-items: center;
    gap: 4px;
}

.radio-squ i {
    width: 7px;
    height: 7px;
    border-radius: 50%;
    background: #f00;
}

.swap {
    width: 48px;
    height: 48px;
    margin: 11px 17px 0 22px;
    border: 1px solid #666;
    border-radius: 50%;
    display: flex;
    align-items: center;
    justify-content: center;
}

.gearbar {
    position: absolute;
    left: 1847px;
    top: 12px;
    display: flex;
    align-items: flex-start;
}

.gear-col {
    width: 70px;
    display: flex;
    flex-direction: column;
    align-items: center;
    font-size: 20px;
    font-weight: 500;
    line-height: 24px;
    letter-spacing: -0.5px;
}

.gear-col i {
    width: 10px;
    height: 10px;
    margin-top: 9px;
    border: 1px solid #999;
    border-radius: 50%;
    background: #4a4a4a;
}

.trip {
    position: absolute;
    display: flex;
    flex-direction: column;
    align-items: center;
    font-family: "Open Sans", sans-serif;
    font-weight: 600;
    font-size: 19px;
    letter-spacing: -0.2px;
}

.trip-top {
    left: 2151px;
    top: 135px;
    width: 120px;
    line-height: 24px;
}

.trip-top svg {
    margin-left: -10px;
    margin-bottom: 7px;
}

.trip-bottom {
    left: 2164px;
    top: 672px;
    width: 120px;
    line-height: 27px;
}

/* lower meters */
.meters {
    position: absolute;
    width: 249px;
}

.meters-left {
    left: 297px;
    top: 696px;
}

.meters-right {
    left: 1813px;
    top: 697px;
}

.meter {
    margin-bottom: 22px;
}

.track {
    position: relative;
    height: 14px;
    border: 1.5px solid #ddd;
    border-top: 0;
}

.ticks {
    display: flex;
    height: 5px;
}

.ticks i {
    flex: 1;
    border-right: 1px solid #ddd;
}

.ticks i:last-child {
    border-right: 0;
}

.fill {
    position: absolute;
    left: 4px;
    top: 4px;
    height: 6px;
    background: #0eb55c;
}

.meter-row {
    display: flex;
    justify-content: space-between;
    margin-top: 6px;
    height: 18px;
    line-height: 18px;
    font-size: 16.5px;
    font-weight: 500;
    letter-spacing: -0.8px;
    color: #f0f0f0;
    white-space: nowrap;
}

.meter-row b {
    font-weight: 700;
    font-size: 19px;
    letter-spacing: -0.2px;
}

/* airspeed */
.speed {
    position: absolute;
    left: 722px;
    top: 652px;
    width: 916px;
    height: 170px;
    display: flex;
    flex-direction: column;
    align-items: center;
}

.speed-scale {
    display: flex;
    margin-top: 18px;
    width: 536px;
    color: #e4e4e4;
    font-size: 21px;
    line-height: 24px;
}

.speed-scale span {
    width: 67px;
    text-align: center;
}

.hold-mark {
    position: relative;
}

.hold-mark em {
    position: absolute;
    left: 0;
    top: 24px;
    width: 67px;
    font-style: normal;
    font-size: 14.5px;
    line-height: 14px;
    color: #ee1c25;
}

.speed-read {
    position: relative;
    display: flex;
    align-items: flex-start;
    width: 620px;
    height: 73px;
    margin-top: 5px;
    padding-left: 143px;
}

.limit {
    position: absolute;
    top: 5px;
    font-size: 21px;
    line-height: 24px;
    color: #e4e4e4;
    display: flex;
    gap: 7px;
}

.limit i {
    width: 4px;
    height: 4px;
    margin-top: 7px;
    border-radius: 50%;
    background: #fff;
}

.limit-low {
    left: 7px;
}

.limit-high {
    right: 6px;
}

.air-value {
    font-size: 51px;
    line-height: 52px;
    font-weight: 700;
    letter-spacing: -0.6px;
    margin-top: 7px;
}

.air-label {
    margin: 11px 0 0 12px;
    width: 122px;
    font-size: 20.5px;
    line-height: 21px;
    letter-spacing: -0.4px;
    color: #eee;
}

.ground {
    font-size: 16px;
    letter-spacing: -0.3px;
    color: #eee;
    font-weight: 500;
    margin-top: 11px;
    line-height: 19px;
}

.ground div {
    margin-top: 0;
    font-size: 16px;
    letter-spacing: -0.2px;
    line-height: 28px;
}

.ground b {
    font-size: 27px;
    letter-spacing: -0.5px;
    color: #fff;
}

.modes {
    display: flex;
    gap: 12px;
}

.mode {
    width: 102px;
    height: 60px;
    border: 1px solid #444;
    border-bottom: 0;
    border-radius: 13px 13px 0 0;
    display: flex;
    flex-direction: column;
    align-items: center;
}

.mode-top {
    height: 36px;
    margin-top: 8px;
    display: flex;
    align-items: center;
    gap: 6px;
    font-size: 19.5px;
    font-weight: 500;
    letter-spacing: -0.4px;
}

.mode-top svg {
    display: block;
}
```
